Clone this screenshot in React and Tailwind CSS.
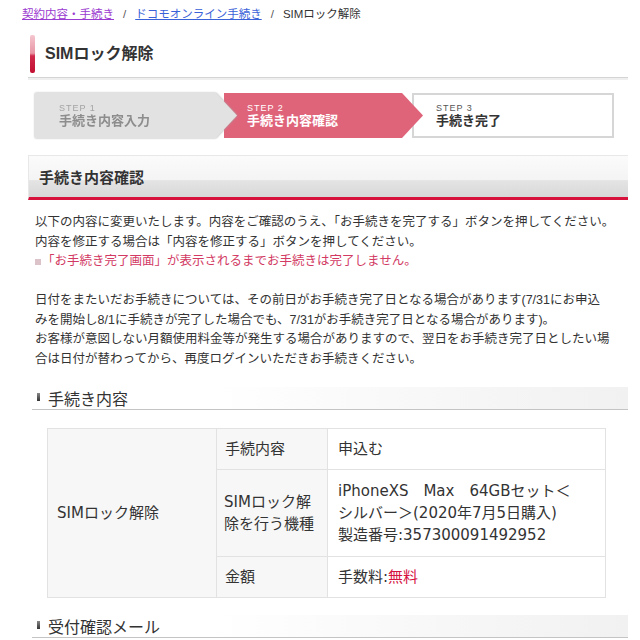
export default function App() {
  const arrow = '[clip-path:polygon(0_0,calc(100%-21px)_0,100%_50%,calc(100%-21px)_100%,0_100%)]'

  return (
    <div className="min-h-screen bg-white text-[#333] font-['Liberation_Sans','Noto_Sans_CJK_JP',sans-serif]">
      {/* Breadcrumb */}
      <div className="flex h-[26px] pl-[22px] pt-[4px] text-[11.5px] leading-[20px]">
        <a className="text-[#9b3ad0] underline">契約内容・手続き</a>
        <span className="mx-[9px] text-[#555]">/</span>
        <a className="text-[#3a62d8] underline">ドコモオンライン手続き</a>
        <span className="mx-[9px] text-[#555]">/</span>
        <span>SIMロック解除</span>
      </div>

      <div className="ml-[28px] w-[600px]">
        {/* Page title */}
        <div className="mt-[9px] flex h-[38px] items-center pl-[2px]">
          <div className="h-[38px] w-[5px] rounded-[2px] bg-[linear-gradient(#f5c6ce_0%,#e896a6_48%,#d02a4c_55%,#c20f31_100%)]" />
          <h1 className="ml-[10px] text-[16px] font-bold leading-none">SIMロック解除</h1>
        </div>
        <div className="mt-[4px] h-[3px] border-t border-[#d4d4d4] bg-[#efefef]" />

        {/* Steps */}
        <div className="ml-[7px] mt-[13px] flex h-[45px]">
          <div className="relative z-30 w-[202px] shrink-0 [filter:drop-shadow(0_0_1px_#a8a8a8)]">
            <div className={`h-full bg-[#e2e2e2] pl-[24px] pt-[10px] ${arrow}`}>
              <div className="text-[9px] leading-[10px] tracking-[1px] text-[#a3a3a3]">STEP 1</div>
              <div className="text-[13px] font-bold leading-[16px] text-[#8d8d8d]">手続き内容入力</div>
            </div>
          </div>
          <div className="relative z-20 -ml-[13px] w-[199px] shrink-0">
            <div className={`h-full bg-[#df647a] pl-[23px] pt-[10px] text-white ${arrow}`}>
              <div className="text-[9px] leading-[10px] tracking-[1px]">STEP 2</div>
              <div className="text-[13px] font-bold leading-[16px]">手続き内容確認</div>
            </div>
          </div>
          <div className="relative z-10 -ml-[11px] w-[202px] shrink-0 border-2 border-[#d6d6d6] bg-white pl-[22px] pt-[8px]">
            <div className="text-[9px] leading-[10px] tracking-[1px] text-[#555]">STEP 3</div>
            <div className="text-[13px] font-bold leading-[16px]">手続き完了</div>
          </div>
        </div>

        {/* Section header */}
        <div className="mt-[17px] flex h-[45px] items-center border-l border-t border-[#e8e8e8] border-b-[3px] border-b-[#d7133d] bg-[linear-gradient(#fbfbfb_0%,#f4f4f4_58%,#e4e4e4_60%,#d8d8d8_100%)] pl-[10px] pt-[3px]">
          <h2 className="text-[15px] font-bold">手続き内容確認</h2>
        </div>

        {/* Notes */}
        <div className="mt-[13px] whitespace-nowrap pl-[7px] text-[12.5px] leading-[19.5px]">
          <p>
            以下の内容に変更いたします。内容をご確認のうえ、「お手続きを完了する」ボタンを押してください。
            <br />
            内容を修正する場合は「内容を修正する」ボタンを押してください。
            <br />
            <span className="text-[#d23a63]">
              <span className="mr-[1px] inline-block h-[6px] w-[6px] bg-[#dcc2c9] align-middle" />
              「お手続き完了画面」が表示されるまでお手続きは完了しません。
            </span>
          </p>
          <p className="mt-[19.5px]">
            日付をまたいだお手続きについては、その前日がお手続き完了日となる場合があります(7/31にお申込
            <br />
            みを開始し8/1に手続きが完了した場合でも、7/31がお手続き完了日となる場合があります)。
            <br />
            お客様が意図しない月額使用料金等が発生する場合がありますので、翌日をお手続き完了日としたい場
            <br />
            合は日付が替わってから、再度ログインいただきお手続きください。
          </p>
        </div>

        {/* Sub header */}
        <div className="ml-[4px] mt-[18px] flex h-[23px] w-[596px] items-start border-b border-[#c4c4c4] bg-[linear-gradient(to_right,#fff_30%,#f1f1f1_100%)] pl-[5px] pt-[5px]">
          <span className="mt-[1px] h-[8px] w-[3px] bg-[linear-gradient(#888,#333)]" />
          <span className="ml-[8px] text-[16px] leading-[16px]">手続き内容</span>
        </div>

        {/* Detail table */}
        <table className="ml-[19px] mt-[18px] w-[559px] table-fixed border-collapse font-['DejaVu_Sans','Noto_Sans_CJK_JP',sans-serif] text-[15px]">
          <colgroup>
            <col className="w-[169px]" />
            <col className="w-[111px]" />
            <col />
          </colgroup>
          <tbody>
            <tr className="h-[41px]">
              <td rowSpan={3} className="border border-[#e2e2e2] bg-[#f7f7f7] pl-[9px] align-middle">
                SIMロック解除
              </td>
              <td className="border border-[#e2e2e2] bg-[#f7f7f7] pl-[8px]">手続内容</td>
              <td className="border border-[#e2e2e2] pl-[10px]">申込む</td>
            </tr>
            <tr className="h-[87px]">
              <td className="whitespace-nowrap border border-[#e2e2e2] bg-[#f7f7f7] pl-[7px] leading-[22px]">
                SIMロック解
                <br />
                除を行う機種
              </td>
              <td className="whitespace-nowrap border border-[#e2e2e2] pl-[10px] leading-[22px]">
                iPhoneXS　Max　64GBセット＜
                <br />
                シルバー＞(2020年7月5日購入)
                <br />
                製造番号:357300091492952
              </td>
            </tr>
            <tr className="h-[41px]">
              <td className="border border-[#e2e2e2] bg-[#f7f7f7] pl-[8px]">金額</td>
              <td className="border border-[#e2e2e2] pl-[10px]">
                手数料:<span className="text-[#d6113f]">無料</span>
              </td>
            </tr>
          </tbody>
        </table>

        {/* Sub header */}
        <div className="ml-[4px] mt-[17px] flex h-[23px] w-[596px] items-start border-b border-[#c4c4c4] bg-[linear-gradient(to_right,#fff_30%,#f1f1f1_100%)] pl-[5px] pt-[5px]">
          <span className="mt-[1px] h-[8px] w-[3px] bg-[linear-gradient(#888,#333)]" />
          <span className="ml-[8px] text-[16px] leading-[16px]">受付確認メール</span>
        </div>
      </div>
    </div>
  )
}
